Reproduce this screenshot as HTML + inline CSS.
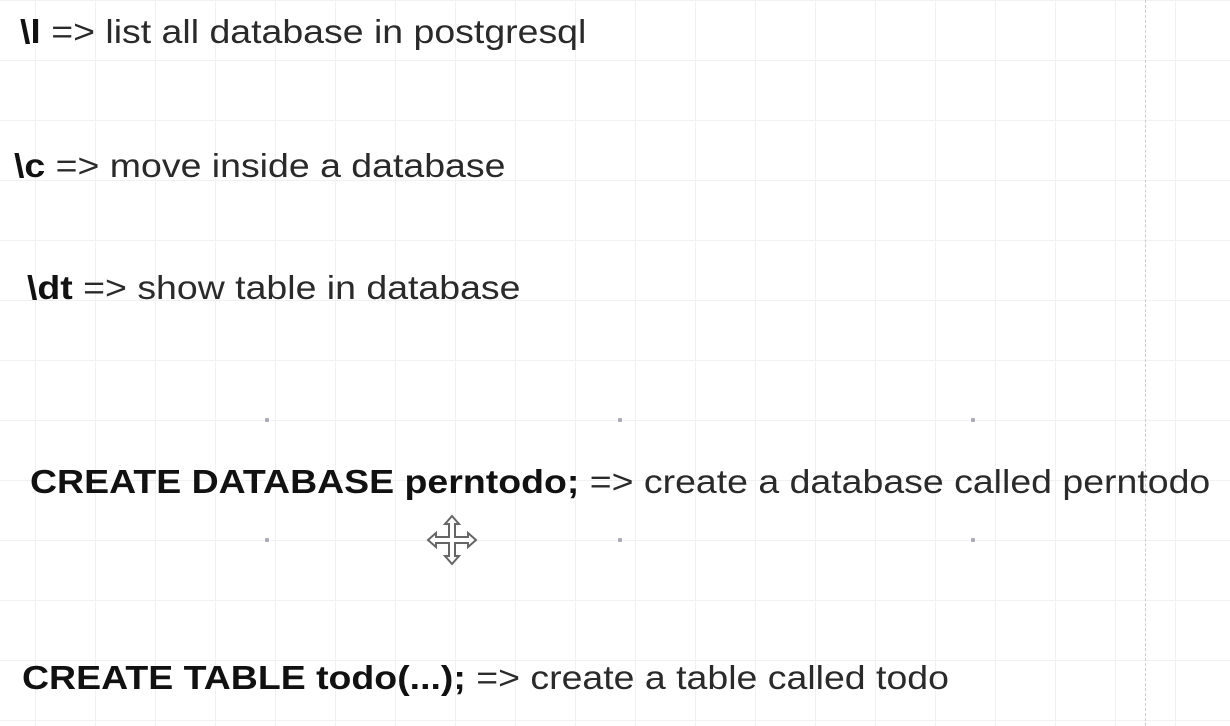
<!DOCTYPE html>
<html><head><style>
html,body{margin:0;padding:0}
body{width:1230px;height:726px;position:relative;overflow:hidden;background:#fff;
background-image:linear-gradient(#f1f1f1 1px,transparent 1px),linear-gradient(90deg,#f1f1f1 1px,transparent 1px);
background-size:60px 60px;background-position:35px 0,35px 0;
font-family:"Liberation Sans",sans-serif;color:#2a2a2a;font-size:33px}
.t{position:absolute;white-space:nowrap;line-height:1;transform:scaleX(1.135);transform-origin:0 0}
b{color:#111}
.vd{position:absolute;left:1145px;top:0;height:726px;border-left:1px dashed #ccc}
.dot{position:absolute;width:4px;height:4px;background:#aab;border-radius:1px}
</style></head><body>
<div class="vd"></div>
<div class="t" style="left:20px;top:15px"><b>\l</b> =&gt; list all database in postgresql</div>
<div class="t" style="left:14px;top:149px"><b>\c</b> =&gt; move inside a database</div>
<div class="t" style="left:27px;top:271px"><b>\dt</b> =&gt; show table in database</div>
<div class="t" style="left:30px;top:465px"><b>CREATE DATABASE perntodo;</b> =&gt; create a database called perntodo</div>
<div class="t" style="left:22px;top:661px"><b>CREATE TABLE todo(...);</b> =&gt; create a table called todo</div>
<div class="dot" style="left:265px;top:418px"></div>
<div class="dot" style="left:618px;top:418px"></div>
<div class="dot" style="left:971px;top:418px"></div>
<div class="dot" style="left:265px;top:538px"></div>
<div class="dot" style="left:618px;top:538px"></div>
<div class="dot" style="left:971px;top:538px"></div>
<svg style="position:absolute;left:426px;top:514px" width="52" height="52" viewBox="0 0 52 52">
<path d="M26 2 L33 10 L29 10 L29 23 L42 23 L42 19 L50 26 L42 33 L42 29 L29 29 L29 42 L33 42 L26 50 L19 42 L23 42 L23 29 L10 29 L10 33 L2 26 L10 19 L10 23 L23 23 L23 10 L19 10 Z" fill="#fff" stroke="#666" stroke-width="2"/>
</svg>
</body></html>
